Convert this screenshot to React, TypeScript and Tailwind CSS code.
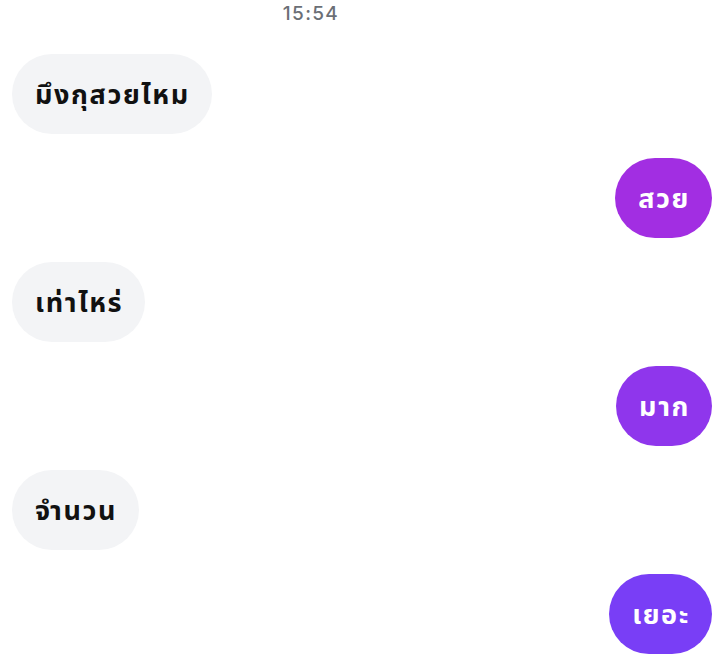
import React from 'react';

type Msg = { text: string; mine: boolean; color?: string };

const messages: Msg[] = [
  { text: 'มึงกุสวยไหม', mine: false },
  { text: 'สวย', mine: true, color: 'bg-[#a22ee2]' },
  { text: 'เท่าไหร่', mine: false },
  { text: 'มาก', mine: true, color: 'bg-[#8f36ec]' },
  { text: 'จำนวน', mine: false },
  { text: 'เยอะ', mine: true, color: 'bg-[#793ef6]' },
];

const App = () => {
  return (
    <div className="w-[728px] h-[659px] bg-white overflow-hidden font-['Noto_Sans','Noto_Sans_Thai',sans-serif]">
      <div className="flex justify-center pr-[106px] pt-[1px] h-[54px]">
        <span className="font-['Inter',sans-serif] text-[19px] leading-[26px] font-medium text-[#6b6f76] tracking-[0.07em]">15:54</span>
      </div>
      <div className="flex flex-col gap-[24px] pl-[12px] pr-[16px]">
        {messages.map((m, i) => (
          <div key={i} className={m.mine ? 'flex justify-end' : 'flex justify-start'}>
            <div
              className={
                'h-[80px] flex items-center pl-[23px] pr-[22px] rounded-full text-[27px] tracking-[0.06em] font-bold ' +
                (m.mine ? m.color + ' text-white' : 'bg-[#f3f4f6] text-[#111111]')
              }
            >
              {m.text}
            </div>
          </div>
        ))}
      </div>
    </div>
  );
};

export default App;
